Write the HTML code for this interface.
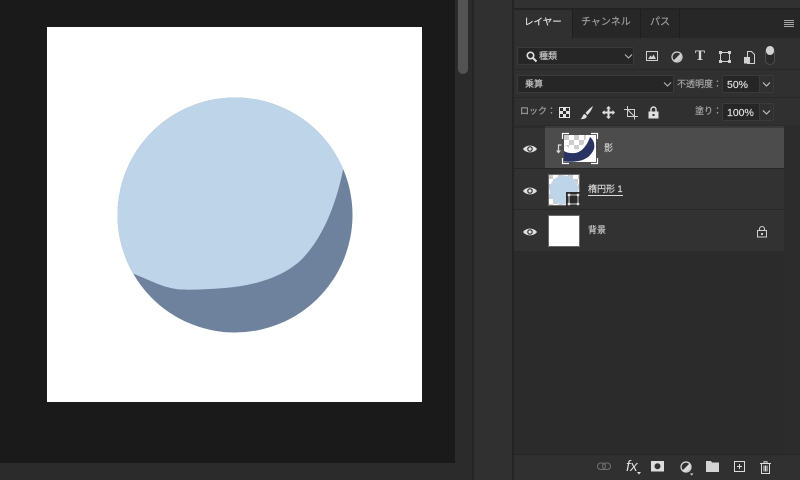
<!DOCTYPE html>
<html lang="ja"><head><meta charset="utf-8">
<style>
html,body{margin:0;padding:0;background:#1a1a1a}
#r{position:relative;width:800px;height:480px;overflow:hidden;background:#1a1a1a;font-family:"Liberation Sans","Noto Sans CJK JP",sans-serif}
#r div{position:absolute;box-sizing:border-box}
.t{white-space:nowrap;color:#c8c8c8;font-size:9px;line-height:12px;-webkit-text-stroke:.15px currentColor}
.box{background:#262626;border:1px solid #3a3a3a;border-radius:2px}
svg{position:absolute;overflow:visible}
</style></head><body><div id="r">
<!-- canvas -->
<svg style="left:0;top:0" width="456" height="464" viewBox="0 0 456 464">
<defs><clipPath id="cc"><circle cx="235" cy="215" r="117.500"/></clipPath></defs>
<rect x="47" y="27" width="375" height="375" fill="#fff"/>
<circle cx="235" cy="215" r="117.500" fill="#6e829e"/>
<path clip-path="url(#cc)" d="M345 160L343 170C336 205 322 240 300 261C280 279 250 286 225 288C205 289.500 190 290 180 289.500C163 288 150 280 134 274L124 270H100V90H360V160Z" fill="#bed4e9"/>
</svg>
<!-- canvas scrollbars -->
<div style="left:0;top:463px;width:455px;height:17px;background:#2b2b2b"></div>
<div style="left:455px;top:0;width:17px;height:480px;background:#2b2b2b"></div>
<div style="left:458px;top:0;width:10px;height:74px;background:#535353;border-radius:0 0 5px 5px"></div>
<!-- middle strip -->
<div style="left:472px;top:0;width:2px;height:480px;background:#242424"></div>
<div style="left:474px;top:0;width:38px;height:480px;background:#303030"></div>
<div style="left:512px;top:0;width:2px;height:480px;background:#242424"></div>
<!-- panel -->
<div style="left:514px;top:0;width:286px;height:480px;background:#303030"></div>
<div style="left:514px;top:0;width:286px;height:8px;background:#313131"></div>
<div style="left:514px;top:8px;width:286px;height:2px;background:#232323"></div>
<div style="left:514px;top:10px;width:286px;height:28px;background:#272727"></div>
<div style="left:514px;top:10px;width:58px;height:28px;background:#303030"></div>
<div style="left:572px;top:10px;width:1px;height:28px;background:#1f1f1f"></div>
<div style="left:640px;top:10px;width:1px;height:28px;background:#1f1f1f"></div>
<div style="left:679px;top:10px;width:1px;height:28px;background:#1f1f1f"></div>
<div class="t" style="left:524px;top:17px;font-size:9.500px;color:#e6e6e6">レイヤー</div>
<div class="t" style="left:581px;top:17px;font-size:10px;color:#a0a0a0">チャンネル</div>
<div class="t" style="left:650px;top:17px;font-size:10px;color:#a0a0a0">パス</div>
<svg style="left:784px;top:20px" width="10" height="8"><path d="M0 .5H10M0 2.500H10M0 4.500H10M0 6.500H10" stroke="#a8a8a8" stroke-width="1"/></svg>
<!-- filter row -->
<div class="box" style="left:517px;top:47px;width:117px;height:18px"></div>
<svg style="left:526px;top:51px" width="12" height="11"><circle cx="4.500" cy="4.500" r="3.200" fill="none" stroke="#e0e0e0" stroke-width="1.600"/><path d="M7 7L10.500 10.500" stroke="#e0e0e0" stroke-width="2"/></svg>
<div class="t" style="left:539px;top:50px;color:#c8c8c8">種類</div>
<svg style="left:624px;top:54px" width="9" height="5"><path d="M1 .5L4.500 4L8 .5" fill="none" stroke="#b8b8b8" stroke-width="1.100"/></svg>
<svg style="left:646px;top:51px" width="12" height="11"><rect x=".5" y=".5" width="11" height="9" fill="none" stroke="#d0d0d0"/><path d="M2 8L4.500 4.500L6 6L7.500 3.500L10 8Z" fill="#d0d0d0"/></svg>
<svg style="left:671px;top:51px" width="12" height="12"><circle cx="6" cy="6" r="5" fill="#303030" stroke="#d0d0d0" stroke-width="1.200"/><path d="M9.500 2.500A5 5 0 0 1 2.500 9.500Z" fill="#d0d0d0"/></svg>
<div style="left:695px;top:47px;font:bold 15px/18px 'Liberation Serif',serif;color:#d8d8d8">T</div>
<svg style="left:719px;top:51px" width="12" height="12"><rect x="1.500" y="1.500" width="9" height="9" fill="none" stroke="#d0d0d0"/><path d="M0 0h3v3h-3zM9 0h3v3h-3zM0 9h3v3h-3zM9 9h3v3h-3z" fill="#d0d0d0"/></svg>
<svg style="left:744px;top:51px" width="11" height="13"><path d="M3.500 .5H7.500L10.500 3.500V12.500H3.500Z" fill="none" stroke="#d0d0d0"/><rect x="0" y="6" width="6" height="6.500" fill="#d0d0d0"/></svg>
<div style="left:765px;top:47px;width:10px;height:18px;border:1px solid #4e4e4e;border-radius:5px;background:#2a2a2a"></div>
<div style="left:766px;top:46px;width:8px;height:9px;border-radius:4px;background:#d2d2d2"></div>
<div style="left:514px;top:69px;width:286px;height:1px;background:#282828"></div>
<!-- blend row -->
<div class="box" style="left:517px;top:75px;width:157px;height:18px"></div>
<div class="t" style="left:525px;top:78px;color:#c8c8c8">乗算</div>
<svg style="left:663px;top:82px" width="9" height="5"><path d="M1 .5L4.500 4L8 .5" fill="none" stroke="#b8b8b8" stroke-width="1.100"/></svg>
<div class="t" style="left:677px;top:77.500px;color:#a8a8a8">不透明度：</div>
<div class="box" style="left:722px;top:75px;width:52px;height:18px"></div>
<div style="left:759px;top:76px;width:1px;height:16px;background:#3a3a3a"></div>
<div style="left:760px;top:76px;width:13px;height:16px;background:#303030"></div>
<div class="t" style="left:727px;top:79px;font-size:10.500px;color:#e0e0e0">50%</div>
<svg style="left:762px;top:82px" width="9" height="5"><path d="M1 .5L4.500 4L8 .5" fill="none" stroke="#c8c8c8" stroke-width="1.100"/></svg>
<div style="left:514px;top:97px;width:286px;height:1px;background:#282828"></div>
<!-- lock row -->
<div class="t" style="left:520px;top:105px;color:#a8a8a8">ロック：</div>
<svg style="left:559px;top:107px" width="11" height="11"><rect width="11" height="11" fill="#e4e4e4"/><path d="M1 1h3v3h-3zM7 1h3v3h-3zM4 4h3v3h-3zM1 7h3v3h-3zM7 7h3v3h-3z" fill="#2a2a2a"/></svg>
<svg style="left:580px;top:105px" width="14" height="15"><path d="M13 1C10 3 7.500 5.500 5.500 8L7.500 10C9.500 8 12 4.500 13 1ZM4.500 9C2.500 9.500 3 12.500 0.500 14C3.500 14.500 7 13.500 6.800 10.800Z" fill="#e0e0e0"/></svg>
<svg style="left:602px;top:106px" width="13" height="13"><path d="M6.500 0L9 2.500H7.500V5.500H10.500V4L13 6.500L10.500 9V7.500H7.500V10.500H9L6.500 13L4 10.500H5.500V7.500H2.500V9L0 6.500L2.500 4V5.500H5.500V2.500H4Z" fill="#e0e0e0"/></svg>
<svg style="left:624px;top:106px" width="14" height="14"><path d="M0 3.500H10.500V13.500M3.500 0V10.500H14M3.500 3.500L10.500 10.500" fill="none" stroke="#d0d0d0" stroke-width="1"/></svg>
<svg style="left:648px;top:106px" width="11" height="13"><path d="M3 6V3.500A2.500 2.500 0 0 1 8 3.500V6" fill="none" stroke="#e0e0e0" stroke-width="1.400"/><path d="M.5 5.500H10.500V12.500H.5Z" fill="#e0e0e0"/><rect x="4.500" y="8" width="2" height="2" fill="#303030"/></svg>
<div class="t" style="left:695px;top:105px;color:#a8a8a8">塗り：</div>
<div class="box" style="left:722px;top:103px;width:52px;height:18px"></div>
<div style="left:759px;top:104px;width:1px;height:16px;background:#3a3a3a"></div>
<div style="left:760px;top:104px;width:13px;height:16px;background:#303030"></div>
<div class="t" style="left:727px;top:107px;font-size:10.500px;color:#e0e0e0">100%</div>
<svg style="left:762px;top:110px" width="9" height="5"><path d="M1 .5L4.500 4L8 .5" fill="none" stroke="#c8c8c8" stroke-width="1.100"/></svg>
<!-- list -->
<div style="left:514px;top:125px;width:286px;height:330px;background:#2b2b2b"></div>
<div style="left:545px;top:126px;width:239px;height:2px;background:#3a3a3a"></div>
<div style="left:514px;top:128px;width:31px;height:40px;background:#323232"></div>
<div style="left:545px;top:128px;width:239px;height:40px;background:#4c4c4c"></div>
<div style="left:514px;top:169px;width:270px;height:40px;background:#323232"></div>
<div style="left:514px;top:210px;width:270px;height:41px;background:#323232"></div>
<div style="left:514px;top:168px;width:270px;height:1px;background:#272727"></div>
<div style="left:514px;top:209px;width:270px;height:1px;background:#272727"></div>
<svg style="left:523px;top:144px" width="14" height="10"><path d="M0 5C3 .5 11 .5 14 5C11 9.500 3 9.500 0 5Z" fill="#e0e0e0"/><circle cx="7" cy="5" r="2.800" fill="#323232"/><circle cx="7" cy="5" r="1.600" fill="#e0e0e0"/></svg>
<svg style="left:523px;top:186px" width="14" height="10"><path d="M0 5C3 .5 11 .5 14 5C11 9.500 3 9.500 0 5Z" fill="#e0e0e0"/><circle cx="7" cy="5" r="2.800" fill="#323232"/><circle cx="7" cy="5" r="1.600" fill="#e0e0e0"/></svg>
<svg style="left:523px;top:227px" width="14" height="10"><path d="M0 5C3 .5 11 .5 14 5C11 9.500 3 9.500 0 5Z" fill="#e0e0e0"/><circle cx="7" cy="5" r="2.800" fill="#323232"/><circle cx="7" cy="5" r="1.600" fill="#e0e0e0"/></svg>
<!-- clip arrow -->
<svg style="left:555px;top:144px" width="7" height="10"><path d="M6.500 1H3.500V8" fill="none" stroke="#dcdcdc" stroke-width="1.200"/><path d="M1 6.500H6L3.500 9.500Z" fill="#dcdcdc"/></svg>
<!-- shadow thumbnail -->
<svg style="left:562px;top:133px" width="36" height="31" viewBox="0 0 36 31">
<defs><pattern id="c" width="10" height="10" patternUnits="userSpaceOnUse" x="2" y="2"><rect width="10" height="10" fill="#fff"/><rect width="5" height="5" fill="#cdcdcd"/><rect x="5" y="5" width="5" height="5" fill="#cdcdcd"/></pattern></defs>
<rect x="2" y="2" width="32" height="27" fill="#fff"/>
<path d="M2 2H24C24 8 21 13 17 16C12 17 8 16 2 11Z" fill="url(#c)"/>
<path d="M2 18C5 20 9 20.500 13 20C19 19.500 25 13 28 4C32 7 33 12 32 16C29 23 24 26 19 27.500C13 29 7 29 2 28.500Z" fill="#2a3462"/>
<path d="M.5 6V.5H7M29 .5H35.500V6M35.500 25V30.500H29M7 30.500H.5V25" fill="none" stroke="#fff" stroke-width="1.200"/>
</svg>
<div class="t" style="left:604px;top:142px;color:#cfcfcf">影</div>
<!-- ellipse thumbnail -->
<svg style="left:548px;top:174px" width="32" height="32" viewBox="0 0 32 32">
<defs><pattern id="c2" width="10" height="10" patternUnits="userSpaceOnUse"><rect width="10" height="10" fill="#fff"/><rect width="5" height="5" fill="#cdcdcd"/><rect x="5" y="5" width="5" height="5" fill="#cdcdcd"/></pattern></defs>
<rect width="32" height="32" fill="url(#c2)"/>
<circle cx="16" cy="16" r="14.500" fill="#bed4e9"/>
<rect x=".5" y=".5" width="31" height="31" fill="none" stroke="#6a6a6a"/>
<rect x="18" y="18" width="14" height="14" fill="#2c2c2c"/>
<rect x="21" y="21" width="9" height="9" fill="none" stroke="#d0d0d0"/>
<path d="M20 20h2v2h-2zM29 20h2v2h-2zM20 29h2v2h-2zM29 29h2v2h-2z" fill="#e0e0e0" stroke="#e0e0e0" stroke-width=".5"/>
</svg>
<div class="t" style="left:588px;top:183px;color:#dcdcdc;border-bottom:1px solid #dcdcdc;line-height:12px;padding-bottom:0">楕円形 1</div>
<!-- bg thumbnail -->
<div style="left:548px;top:215px;width:32px;height:32px;background:#fff;border:1px solid #6a6a6a"></div>
<div class="t" style="left:588px;top:224px;color:#cfcfcf">背景</div>
<svg style="left:757px;top:226px" width="10" height="12"><path d="M2.500 5V3A2.500 2.500 0 0 1 7.500 3V5" fill="none" stroke="#d0d0d0" stroke-width="1.100"/><rect x=".5" y="4.500" width="9" height="6.500" fill="none" stroke="#d0d0d0"/><rect x="4" y="7" width="2" height="2" fill="#d0d0d0"/></svg>
<!-- right scrollbar -->
<div style="left:784px;top:125px;width:16px;height:330px;background:#2c2c2c"></div>
<!-- bottom bar -->
<div style="left:514px;top:454px;width:286px;height:1px;background:#252525"></div>
<div style="left:514px;top:455px;width:286px;height:25px;background:#303030"></div>
<svg style="left:597px;top:462px" width="14" height="9"><rect x=".5" y="1" width="8" height="6.500" rx="3.200" fill="none" stroke="#6e6e6e" stroke-width="1.100"/><rect x="5.500" y="1" width="8" height="6.500" rx="3.200" fill="none" stroke="#6e6e6e" stroke-width="1.100"/></svg>
<div style="left:626px;top:458px;font:italic 15px/18px 'Liberation Sans',sans-serif;color:#dcdcdc">fx</div>
<svg style="left:637px;top:472px" width="4" height="3"><path d="M0 0H4L2 2.500Z" fill="#e0e0e0"/></svg>
<svg style="left:651px;top:461px" width="14" height="11"><rect width="13" height="10.500" fill="#dcdcdc"/><circle cx="6.500" cy="5.200" r="3" fill="#333"/></svg>
<svg style="left:680px;top:461px" width="14" height="15"><circle cx="6" cy="6" r="5" fill="#303030" stroke="#dcdcdc" stroke-width="1.200"/><path d="M9.500 2.500A5 5 0 0 1 2.500 9.500Z" fill="#dcdcdc"/><path d="M10 12.500H13.500L11.700 14.500Z" fill="#e0e0e0"/></svg>
<svg style="left:706px;top:461px" width="13" height="11"><path d="M0 0H5L6 1.500H13V11H0Z" fill="#d4d4d4"/></svg>
<svg style="left:734px;top:461px" width="12" height="12"><rect x=".5" y=".5" width="10" height="10" fill="none" stroke="#dcdcdc"/><path d="M5.500 3V8M3 5.500H8" stroke="#dcdcdc"/></svg>
<svg style="left:760px;top:461px" width="12" height="13"><path d="M0 2.500H11M4 2.500V.8H7V2.500M1.500 2.500V12.500H9.500V2.500M4 4.500V10.500M5.500 4.500V10.500M7 4.500V10.500" fill="none" stroke="#dcdcdc" stroke-width="1"/></svg>
</div></body></html>
